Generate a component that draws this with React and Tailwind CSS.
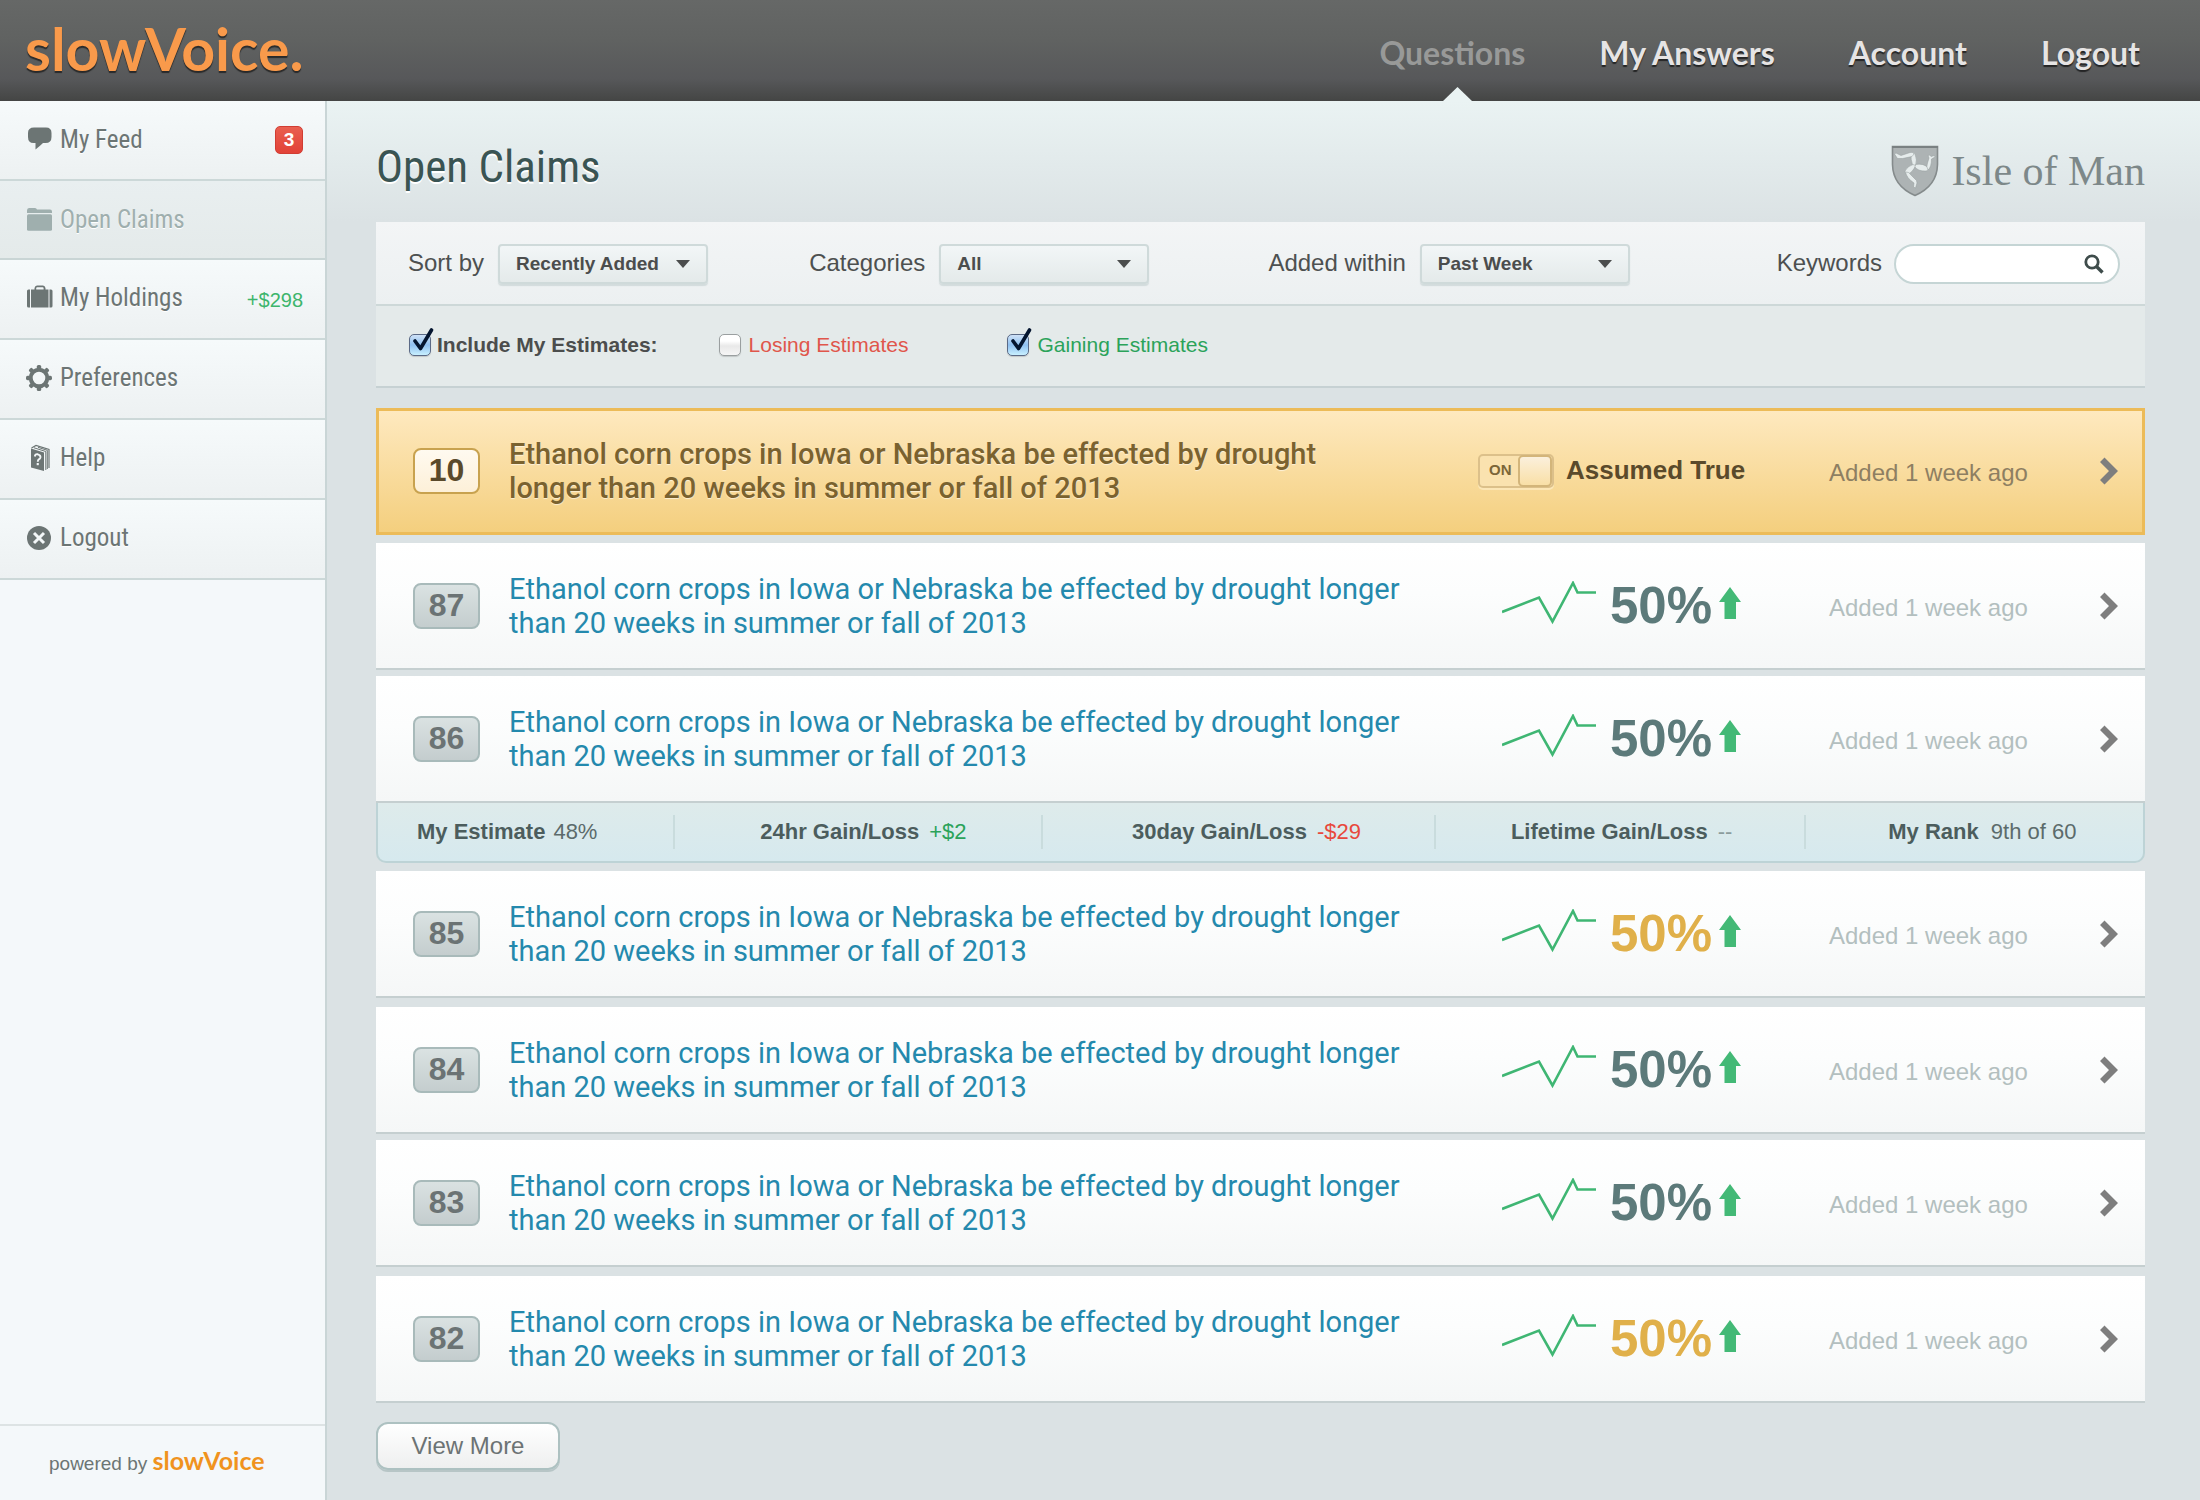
import React from "react";

const helvetica = "font-['Liberation_Sans',Arial,sans-serif]";
const condensed = "font-['Roboto_Condensed','Liberation_Sans_Narrow',Roboto,sans-serif]";
const rounded = "font-['Lato',sans-serif]";

const CLAIM_TEXT =
  "Ethanol corn crops in Iowa or Nebraska be effected by drought longer than 20 weeks in summer or fall of 2013";

const claims = [
  { id: 87, tone: "text-[#5c7a7a]", gap: "mt-2" },
  { id: 86, tone: "text-[#5c7a7a]", gap: "mt-1.5", stats: true },
  { id: 85, tone: "text-[#e0b04a]", gap: "mt-2" },
  { id: 84, tone: "text-[#5c7a7a]", gap: "mt-[9px]" },
  { id: 83, tone: "text-[#5c7a7a]", gap: "mt-1.5" },
  { id: 82, tone: "text-[#e0b04a]", gap: "mt-[9px]" },
];

const nav = [
  { label: "Questions", active: true },
  { label: "My Answers" },
  { label: "Account" },
  { label: "Logout" },
];

function FeedIcon() {
  return (
    <svg width="28" height="28" viewBox="0 0 28 28" fill="currentColor" aria-hidden="true">
      <path d="M9 1.500h12q5.500 0 5.500 5.500v4q0 6-6 6h-2.500q-2.500 2.500-7.500 6.500v-6.500h-2q-5.500 0-5.500-6V7q0-5.500 6-5.500z" />
    </svg>
  );
}

function FolderIcon() {
  return (
    <svg width="28" height="28" viewBox="0 0 28 28" fill="currentColor" aria-hidden="true">
      <path d="M2 7V4.500Q2 2 4 2h6q1.500 0 2 1.500h13q2 0 2 2V7z" />
      <rect x="2" y="8.200" width="25" height="16.500" rx="1.500" />
    </svg>
  );
}

function HoldingsIcon() {
  return (
    <svg width="28" height="28" viewBox="0 0 28 28" fill="currentColor" aria-hidden="true">
      <path d="M5 5.500v18H3.500Q2 23.500 2 22V7q0-1.500 1.500-1.500zM24.500 5.500H26q1.500 0 1.500 1.500v15q0 1.500-1.500 1.500h-1.500z" />
      <path d="M6 5.500h3.500V4Q10 1.500 12 1.500h6q2 0 2.500 2.500v1.500h3v18H6zM11.200 5.500h7.400V4.200q0-1-1-1h-5.400q-1 0-1 1z" fillRule="evenodd" />
    </svg>
  );
}

function GearIcon() {
  const angles = [0, 45, 90, 135, 180, 225, 270, 315];
  return (
    <svg width="28" height="28" viewBox="0 0 28 28" aria-hidden="true">
      <circle cx="14" cy="14" r="8.300" fill="none" stroke="currentColor" strokeWidth="4" />
      {angles.map((a) => (
        <rect key={a} x="11.800" y="1" width="4.400" height="5" rx="1.600" fill="currentColor" transform={`rotate(${a} 14 14)`} />
      ))}
    </svg>
  );
}

function HelpIcon() {
  return (
    <svg width="28" height="28" viewBox="0 0 28 28" aria-hidden="true">
      <path d="M6 4.500 19 8.500V27L6 23.500z" fill="currentColor" />
      <path d="M6.500 4 11 1.500 24 5.500V24" fill="none" stroke="currentColor" strokeWidth="1.200" />
      <path d="M9 3.800 20.800 7.500V26M13 3.300l9.300 3V25" fill="none" stroke="currentColor" strokeWidth="1" />
      <path d="M9.800 12.500q.4-2.800 3-2.200 3 .8 2.600 3.200-.3 1.300-1.600 1.900-1 .5-1 2.300" fill="none" stroke="#f3f7f8" strokeWidth="1.900" />
      <rect x="11.700" y="19" width="2.100" height="2.200" fill="#f3f7f8" />
    </svg>
  );
}

function CloseIcon() {
  return (
    <svg width="28" height="28" viewBox="0 0 28 28" aria-hidden="true">
      <circle cx="14" cy="14" r="12" fill="currentColor" />
      <path d="M9 9l10 10M19 9l-10 10" stroke="#f3f7f8" strokeWidth="3" />
    </svg>
  );
}

const menu = [
  { label: "My Feed", Icon: FeedIcon, badge: "3" },
  { label: "Open Claims", Icon: FolderIcon, active: true },
  { label: "My Holdings", Icon: HoldingsIcon, amount: "+$298" },
  { label: "Preferences", Icon: GearIcon },
  { label: "Help", Icon: HelpIcon },
  { label: "Logout", Icon: CloseIcon },
];

function Shield() {
  return (
    <svg width="48" height="52" viewBox="0 0 48 52" aria-hidden="true">
      <path d="M1.500 1.500h45v18Q46 41 24 50.500 2 41 1.500 19.500z" fill="#adb3b4" stroke="#858b8c" strokeWidth="1.600" />
      <path d="M1 2h46" stroke="#7a8182" strokeWidth="2" />
      <g fill="#e6ecec" stroke="#939a9b" strokeWidth="0.500" strokeLinejoin="round">
        <path d="M22 21.500Q19.500 14 20 9.500 21.500 6 24 9 26.500 15 24.500 20.500z" />
        <path d="M23 9Q22 6.500 19 7.500L10 10.500 5 8 3.500 9 6.500 13.500 11.500 13.500 21 11.500z" />
        <path d="M24.500 19.500Q32 18 37 22.500 38.500 25.500 35 26 27 26.500 23.500 21.500z" />
        <path d="M37 25Q35 22 36.500 18L38 13 37 10.500 38.500 10 40 11.500 43.500 10.500 44 12 40.500 14Q40.500 22 37 25z" />
        <path d="M24.500 20.500Q22 27 17 29 13.500 29.500 14 26 16.500 21 22 19.500z" />
        <path d="M14.500 27Q18 26.500 20 30L25.500 35.500 26 38 24.500 43 22.500 42 23 38Q15.500 33 14.500 27z" />
      </g>
    </svg>
  );
}

function Header() {
  return (
    <header className="flex h-[101px] items-start justify-between bg-[linear-gradient(#666867_0%,#606261_40%,#57585a_78%,#444544_100%)] pl-[25px] pr-[60px]">
      <a href="#home" className={`${rounded} mt-[15px] text-[59px] font-bold leading-[68px] text-[#f99a4b] [text-shadow:0_2px_1px_rgba(0,0,0,0.55)]`}>
        slowVoice.
      </a>
      <nav className={`${rounded} flex h-full gap-[74px] pt-[35px] text-[32px] font-bold leading-9`}>
        {nav.map((n) => (
          <a
            key={n.label}
            href="#nav"
            aria-current={n.active ? "page" : undefined}
            className={
              n.active
                ? "relative text-[#989998]"
                : "relative text-[#e6e4e4] [text-shadow:0_2px_1px_rgba(0,0,0,0.6)]"
            }
          >
            {n.label}
            {n.active && (
              <svg className="absolute bottom-0 left-16" width="29" height="14" viewBox="0 0 29 14" aria-hidden="true">
                <path d="M0 14 14.500 0 29 14z" fill="#eaf3f3" />
              </svg>
            )}
          </a>
        ))}
      </nav>
    </header>
  );
}

function Sidebar() {
  return (
    <aside className="flex w-[327px] shrink-0 flex-col border-r-2 border-[#c9d5d6] bg-[#f4f8fa]">
      <nav>
        {menu.map(({ label, Icon, active, badge, amount }) => (
          <a
            key={label}
            href="#menu"
            aria-current={active ? "page" : undefined}
            className={
              active
                ? "flex h-[79px] items-center border-b-2 border-[#c9d5d5] bg-[linear-gradient(#e9eff0,#e4eaea)] pl-[25px] pr-[22px] text-[#9fafae]"
                : "flex h-20 items-center border-b-2 border-[#ccd8d8] bg-[linear-gradient(#f6fafb,#edf1f2)] pb-0.5 pl-[25px] pr-[22px] text-[#6c7574] first:pb-0"
            }
          >
            <Icon />
            <span className={`${condensed} ml-[7px] flex-1 text-[25px] leading-8 [text-shadow:0_1px_0_#fff]`}>{label}</span>
            {badge && (
              <span className={`${helvetica} h-7 w-7 rounded-[5px] border border-[#d13d33] bg-[linear-gradient(#e95f50,#e24238)] text-center text-[19px] font-bold leading-[26px] text-white`}>
                {badge}
              </span>
            )}
            {amount && <span className={`${helvetica} pt-1 text-xl leading-7 text-[#3db56c]`}>{amount}</span>}
          </a>
        ))}
      </nav>
      <footer className={`${helvetica} mt-auto h-[76px] border-t-2 border-[#dde3e4] pl-[49px] pt-4 text-[19px] leading-9 text-[#6c7574]`}>
        powered by{" "}
        <a href="#home" className={`${rounded} text-[25px] font-bold text-[#f0931e]`}>
          slowVoice
        </a>
      </footer>
    </aside>
  );
}

function Select({ label, value, id }) {
  return (
    <div className="flex items-center gap-3.5">
      <label htmlFor={id} className="text-2xl leading-8 text-[#4d5050]">
        {label}
      </label>
      <div className="relative mt-0.5">
        <select
          id={id}
          defaultValue={value}
          className="block h-10 w-[210px] appearance-none rounded-[4px] border-2 border-[#cfdada] bg-[linear-gradient(#f2f6f7,#e4eaea)] pl-4 text-[19px] font-bold text-[#4b4d4d] shadow-[0_2px_1px_rgba(160,180,180,0.35)]"
        >
          <option>{value}</option>
        </select>
        <svg className="pointer-events-none absolute right-[18px] top-4" width="14" height="8" viewBox="0 0 14 8" aria-hidden="true">
          <path d="M0 0h14L7 8z" fill="#4b4d4d" />
        </svg>
      </div>
    </div>
  );
}

function Check({ id, label, checked, className, gap }) {
  return (
    <div className={`flex items-center ${gap}`}>
      <span className="relative h-[22px] w-[22px]">
        <input
          id={id}
          type="checkbox"
          defaultChecked={checked}
          className="peer block h-[22px] w-[22px] appearance-none rounded-[5px] border border-[#9a9fa0] bg-[linear-gradient(#fff_30%,#e9e9e9_55%,#f6f6f6)] shadow-[0_1px_1px_rgba(0,0,0,0.15)] checked:border-[#5b6a86] checked:bg-[linear-gradient(#cfe2f7,#8fc0f0_50%,#c8f0ff)]"
        />
        <svg className="pointer-events-none absolute bottom-1 left-1 hidden peer-checked:block" width="22" height="24" viewBox="0 0 22 24" aria-hidden="true">
          <path d="M2 13 7.500 20.500 18.500 2" fill="none" stroke="#04152f" strokeWidth="3.600" strokeLinecap="round" strokeLinejoin="round" />
        </svg>
      </span>
      <label htmlFor={id} className={className}>
        {label}
      </label>
    </div>
  );
}

function Filters() {
  return (
    <form className={helvetica}>
      <div className="grid h-[84px] grid-cols-[401fr_459fr_508fr_auto] items-center border-b-2 border-[#cdd8d8] bg-[linear-gradient(#f3f5f6,#ecf0f1)] pl-8 pr-[25px]">
        <Select id="sort" label="Sort by" value="Recently Added" />
        <Select id="categories" label="Categories" value="All" />
        <Select id="within" label="Added within" value="Past Week" />
        <div className="flex items-center gap-3">
          <label htmlFor="keywords" className="text-2xl leading-8 text-[#4d5050]">
            Keywords
          </label>
          <div className="relative mt-0.5">
            <input id="keywords" type="text" className="block h-10 w-[226px] rounded-full border-2 border-[#c5d5d5] bg-white pl-4 pr-12 text-xl" />
            <svg className="absolute right-4 top-2.5" width="20" height="20" viewBox="0 0 20 20" aria-hidden="true">
              <circle cx="8" cy="8" r="6.200" fill="none" stroke="#3e4c4b" strokeWidth="2.800" />
              <path d="M12.500 12.500 18.500 18.500" stroke="#3e4c4b" strokeWidth="3.400" />
            </svg>
          </div>
        </div>
      </div>
      <div className="flex h-[82px] items-center border-b-2 border-[#c6d1d3] bg-[#e4eaea] pb-[3px] pl-[33px] text-[21px] leading-7">
        <Check id="include" label="Include My Estimates:" checked gap="gap-[6px]" className="font-bold text-[#4b4d4d]" />
        <div className="ml-[61px]">
          <Check id="losing" label="Losing Estimates" gap="gap-2" className="text-[#e0564b]" />
        </div>
        <div className="ml-[99px]">
          <Check id="gaining" label="Gaining Estimates" checked gap="gap-2" className="text-[#2ba35a]" />
        </div>
      </div>
    </form>
  );
}

function Chevron() {
  return (
    <svg width="18" height="28" viewBox="0 0 18 28" aria-hidden="true">
      <path d="M4.500 0.500 18 14 4.500 27.500 0 23 9 14 0 5z" fill="#7e7e7e" />
    </svg>
  );
}

function Trend({ tone }) {
  return (
    <div className="flex items-center pl-6">
      <svg className="mb-1.5" width="94" height="44" viewBox="0 0 94 44" aria-hidden="true">
        <path d="M0 31 37 16.500 50.500 40.500 71 2 75.500 11.500H94" fill="none" stroke="#3fb673" strokeWidth="2.600" />
      </svg>
      <span className={`${tone} ml-3.5 text-[51px] font-bold leading-[56px]`}>50%</span>
      <svg className="mb-1.5 ml-[7px]" width="22" height="32" viewBox="0 0 22 32" aria-hidden="true">
        <path d="M11 0 22 15H17V32H5.500V15H0z" fill="#43b976" />
      </svg>
    </div>
  );
}

function FeaturedClaim() {
  return (
    <article className="mt-5 flex h-[127px] items-center border-[3px] border-[#ecbb58] bg-[linear-gradient(#fee9bf,#f4cf7e)] pb-0.5 pl-[34px] pr-6">
      <span className={`${helvetica} h-[46px] w-[67px] rounded-lg border-2 border-[#c8a24f] bg-[linear-gradient(#fffaf0,#fdf0d8)] text-center text-[32px] font-bold leading-10 text-[#5a4a2b]`}>
        10
      </span>
      <h2 className="ml-[29px] flex-1 font-['Roboto',sans-serif] text-[29px] font-medium leading-[34px] text-[#7a622f] [text-shadow:0_1px_1px_rgba(255,255,255,0.6)]">
        <a href="#claim" className="block max-w-[850px]">{CLAIM_TEXT}</a>
      </h2>
      <div className={`${helvetica} flex w-[351px] items-center gap-3`}>
        <button
          type="button"
          role="switch"
          aria-checked="true"
          aria-label="Assumed True"
          className="flex h-[34px] w-[76px] items-center justify-between rounded-[5px] border-2 border-[#dcc08a] bg-[#fae2af] pl-[9px] text-[15px] font-bold text-[#7c6638] shadow-[0_2px_0_rgba(255,240,205,0.6)]"
        >
          ON
          <span className="h-8 w-[34px] rounded-[5px] border-2 border-[#d3b57a] bg-[linear-gradient(#fbf0dc,#f9dfa6)]" />
        </button>
        <span className="pb-0.5 text-[26px] font-bold leading-8 text-[#5a4a2b]">Assumed True</span>
      </div>
      <time className={`${helvetica} w-[200px] pt-1 text-2xl leading-8 text-[#8e7f62]`}>Added 1 week ago</time>
      <a href="#claim" aria-label="Open claim 10" className="ml-[71px]">
        <Chevron />
      </a>
    </article>
  );
}

const stats = [
  { label: "My Estimate", value: "48%", tone: "text-[#5c6b6b]", cell: "justify-start gap-2 pl-[39px]" },
  { label: "24hr Gain/Loss", value: "+$2", tone: "text-[#2ba35a]", cell: "justify-center gap-2.5 pl-2.5" },
  { label: "30day Gain/Loss", value: "-$29", tone: "text-[#e8483c]", cell: "justify-center gap-2.5 pl-4" },
  { label: "Lifetime Gain/Loss", value: "--", tone: "text-[#8b9c9c]", cell: "justify-center gap-2.5 pl-1" },
  { label: "My Rank", value: "9th of 60", tone: "text-[#5c6b6b]", cell: "justify-center gap-3 pl-4" },
];

function Stats() {
  return (
    <dl className={`${helvetica} grid h-[60px] grid-cols-[298fr_369fr_393fr_371fr_338fr] items-center divide-x-2 divide-[#c9dcdd] rounded-b-[10px] border-b-2 border-r-2 border-l-2 border-[#bdd3d6] bg-[linear-gradient(#deebeb,#d6e9ee)] text-[22px] leading-[34px]`}>
      {stats.map((s) => (
        <div key={s.label} className={`flex ${s.cell}`}>
          <dt className="font-bold text-[#4c5d5d]">{s.label}</dt>
          <dd className={s.tone}>{s.value}</dd>
        </div>
      ))}
    </dl>
  );
}

function Claim({ claim }) {
  return (
    <article className={claim.gap}>
      <div className="flex h-[127px] items-center border-b-2 border-[#c5cfd0] bg-[linear-gradient(#ffffff,#fcfdfd_40%,#f5f7f7)] pl-[37px] pr-[27px]">
        <span className={`${helvetica} h-[46px] w-[67px] rounded-lg border-2 border-[#a8baba] bg-[linear-gradient(#dae2e2,#c4cdce)] text-center text-[32px] font-bold leading-10 text-[#6b7374]`}>
          {claim.id}
        </span>
        <h2 className="ml-[29px] flex-1 font-['Roboto',sans-serif] text-[29px] font-[450] leading-[34px] text-[#2489ad]">
          <a href="#claim" className="block max-w-[900px]">{CLAIM_TEXT}</a>
        </h2>
        <div className={`${helvetica} w-[351px]`}>
          <Trend tone={claim.tone} />
        </div>
        <time className={`${helvetica} w-[200px] pt-1 text-2xl leading-8 text-[#b3bfbf]`}>Added 1 week ago</time>
        <a href="#claim" aria-label={`Open claim ${claim.id}`} className="ml-[71px]">
          <Chevron />
        </a>
      </div>
      {claim.stats && <Stats />}
    </article>
  );
}

export default function App() {
  return (
    <div className="flex min-h-screen flex-col bg-[#dbe2e4]">
      <Header />
      <div className="flex flex-1">
        <Sidebar />
        <main className="min-w-0 flex-1 bg-[linear-gradient(#eaf3f3,#dbe2e4_121px)] pb-7 pl-[49px] pr-[55px]">
          <div className="flex h-[121px] items-center justify-between pt-2.5">
            <h1 className={`${condensed} text-[45px] leading-[60px] text-[#3a5453] [text-shadow:0_2px_0_#fff]`}>Open Claims</h1>
            <div className="flex items-center gap-3 pt-2 font-['Liberation_Serif',serif] text-[42px] leading-[50px] text-[#7d8889]">
              <Shield />
              Isle of Man
            </div>
          </div>
          <Filters />
          <FeaturedClaim />
          {claims.map((c) => (
            <Claim key={c.id} claim={c} />
          ))}
          <button
            type="button"
            className={`${helvetica} mt-[19px] h-[48px] w-[184px] rounded-xl border-2 border-[#adc1c1] bg-[linear-gradient(#ffffff,#eeefef)] text-2xl text-[#6c7374] shadow-[0_2px_0_#b7c5c6]`}
          >
            View More
          </button>
        </main>
      </div>
    </div>
  );
}
